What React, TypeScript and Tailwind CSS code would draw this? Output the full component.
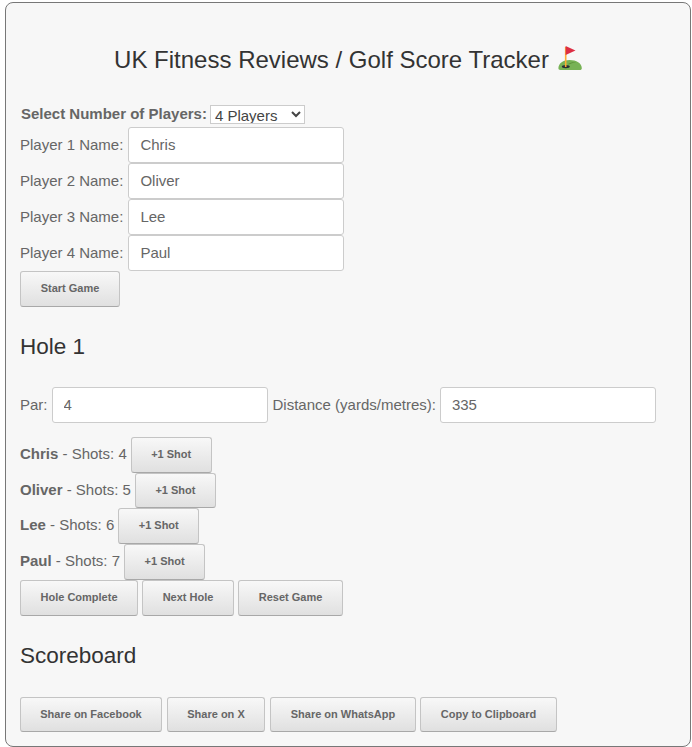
import React from 'react';

const GolfFlag = () => (
  <svg viewBox="0 0 24 24" className="inline-block w-[24px] h-[24px] ml-[9px] align-[-2px]">
    <path d="M0.4 22 C0.8 17 5 14 11.5 14 C18.5 14 23.6 17 23.8 22 C23.9 23.4 23 24 21.8 24 L2.4 24 C1.1 24 0.3 23.3 0.4 22 Z" fill="#77b255" />
    <path d="M10 18 C12 16.6 15 16 18 16.4 C15 16.6 12.5 17.4 10.5 18.6 Z" fill="#5c913b" />
    <ellipse cx="7.8" cy="20.6" rx="4" ry="1.6" fill="#292f33" />
    <rect x="6.9" y="1" width="1.6" height="20" fill="#ffac33" />
    <path d="M7.6 0 L17.5 4.6 L7.6 9 Z" fill="#dd2e44" />
  </svg>
);

const Btn = ({ label, className = '' }: { label: string; className?: string }) => (
  <button className={`h-[35.75px] pb-[1px] rounded-[3px] border border-[#c4c4c4] border-b-[#a8a8a8] bg-gradient-to-b from-[#f8f8f8] to-[#e0e0e0] text-[11px] font-bold text-[#666] whitespace-nowrap shrink-0 ${className}`}>
    {label}
  </button>
);

const Field = ({ value, className = '' }: { value: string; className?: string }) => (
  <input
    readOnly
    value={value}
    className={`h-[36px] px-[11px] pb-[1px] bg-white border border-[#ccc] rounded-[3px] text-[15px] text-[#666] outline-none ${className}`}
  />
);

const players = ['Chris', 'Oliver', 'Lee', 'Paul'];
const shots = [4, 5, 6, 7];

export default function App() {
  return (
    <div className="w-[692px] h-[747px] bg-white pt-[2px] pl-[5px] pr-[1px] font-['Liberation_Sans',Arial,sans-serif] text-[15px] text-[#666]">
      <div className="h-[745px] rounded-[8px] border border-[#777] bg-[#f7f7f7] px-[14px]">
        <h1 className="pt-[41px] h-[101px] text-center text-[24px] leading-[32px] text-[#333]">
          UK Fitness Reviews / Golf Score Tracker
          <GolfFlag />
        </h1>

        <div className="flex items-center h-[21px] pl-[1px] mb-[2px]">
          <label className="font-bold mr-[3px]">Select Number of Players:</label>
          <select className="h-[19px] w-[95px] pl-0 bg-white border border-[#ccc] text-[15px] leading-[17px] text-[#444]" defaultValue="4">
            <option value="4">4 Players</option>
          </select>
        </div>

        {players.map((name, i) => (
          <div key={name} className="flex items-center gap-[5px]">
            <label>Player {i + 1} Name:</label>
            <Field value={name} className="w-[216px]" />
          </div>
        ))}
        <Btn label="Start Game" className="w-[100px] block" />

        <h2 className="mt-[24px] h-[31px] text-[22.5px] leading-[31px] text-[#333]">Hole 1</h2>

        <div className="flex items-center mt-[25px] mb-[14px]">
          <label className="mr-[4px]">Par:</label>
          <Field value="4" className="w-[216px] mr-[5px]" />
          <label className="mr-[4px]">Distance (yards/metres):</label>
          <Field value="335" className="w-[216px]" />
        </div>

        {players.map((name, i) => (
          <div key={name} className="flex items-center gap-[4px] h-[35.75px]">
            <span className="pb-[1px]"><b>{name}</b> - Shots: {shots[i]}</span>
            <Btn label="+1 Shot" className="w-[81px]" />
          </div>
        ))}

        <div className="flex gap-[4px]">
          <Btn label="Hole Complete" className="w-[118px]" />
          <Btn label="Next Hole" className="w-[92px]" />
          <Btn label="Reset Game" className="w-[105px]" />
        </div>

        <h2 className="mt-[24px] h-[31px] text-[22.5px] leading-[31px] text-[#333]">Scoreboard</h2>

        <div className="flex gap-[5px] mt-[26px]">
          <Btn label="Share on Facebook" className="w-[142px]" />
          <Btn label="Share on X" className="w-[98px]" />
          <Btn label="Share on WhatsApp" className="w-[146px] mr-[-1px]" />
          <Btn label="Copy to Clipboard" className="w-[137px]" />
        </div>
      </div>
    </div>
  );
}
